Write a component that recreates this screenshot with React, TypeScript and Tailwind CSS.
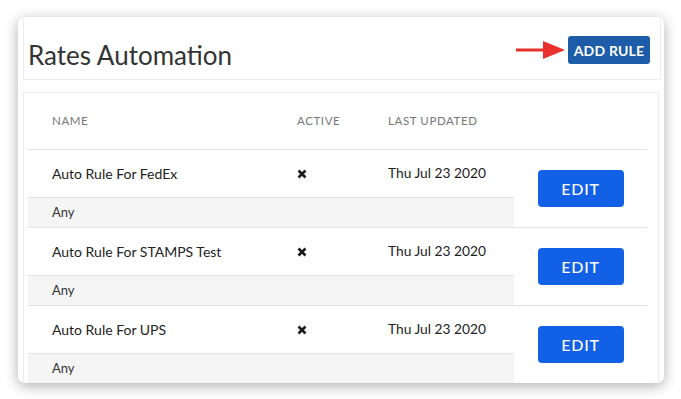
const rules = [
  { name: "Auto Rule For FedEx", updated: "Thu Jul 23 2020" },
  { name: "Auto Rule For STAMPS Test", updated: "Thu Jul 23 2020" },
  { name: "Auto Rule For UPS", updated: "Thu Jul 23 2020" },
];

const CrossIcon = () => (
  <svg width="10" height="10" viewBox="0 0 10 10" className="block">
    <path d="M1.5 1.5 L8.5 8.5 M8.5 1.5 L1.5 8.5" stroke="#1a1a1a" strokeWidth="2.6" />
  </svg>
);

const Arrow = () => (
  <svg width="50" height="20" viewBox="0 0 50 20" className="block">
    <path d="M0 10 H30" stroke="#e8302c" strokeWidth="3.2" />
    <path d="M27 1 L49 10 L27 19 Z" fill="#e8302c" />
  </svg>
);

export default function App() {
  return (
    <div className="w-[681px] h-[399px] bg-white overflow-hidden font-['Lato','Liberation_Sans',sans-serif]">
      <div className="ml-[18px] mt-[17px] w-[646px] h-[366px] bg-white rounded-[7px] shadow-[0_3px_14px_rgba(0,0,0,0.32)] overflow-hidden flex flex-col">
        {/* header panel */}
        <div className="ml-[5px] mr-[3px] mt-[2px] h-[61px] border-x border-b border-[#ececec] flex justify-between">
          <h1 className="pl-[4px] mt-[20px] text-[26px] leading-[32px] text-[#333] font-normal">
            Rates Automation
          </h1>
          <div className="flex items-start mt-[17px] mr-[10px]">
            <div className="mt-[4px] mr-[2px]">
              <Arrow />
            </div>
            <button className="h-[28px] w-[82px] rounded-[3px] bg-[#1d5ca8] text-white text-[14px] font-bold tracking-[0.2px]">
              ADD RULE
            </button>
          </div>
        </div>

        {/* table panel */}
        <div className="ml-[5px] mr-[5px] mt-[12px] flex-1 border-t border-l border-r border-[#ececec] pl-[4px] pr-[11px]">
          <div className="h-[57px] border-b border-[#e2e2e2] flex items-center text-[11.5px] tracking-[0.6px] text-[#777]">
            <div className="w-[269px] pl-[24px]">NAME</div>
            <div className="w-[91px]">ACTIVE</div>
            <div>LAST UPDATED</div>
          </div>
          {rules.map((r, i) => (
            <div
              key={r.name}
              className={`flex ${i < rules.length - 1 ? "border-b border-[#e2e2e2]" : ""}`}
            >
              <div className="w-[486px] flex flex-col">
                <div className="h-[48px] border-b border-[#e2e2e2] flex items-center text-[14px] text-[#222]">
                  <div className="w-[269px] pl-[24px]">{r.name}</div>
                  <div className="w-[91px]">
                    <CrossIcon />
                  </div>
                  <div className="text-[13.75px]">{r.updated}</div>
                </div>
                <div className="h-[29px] bg-[#f5f5f5] flex items-center pl-[24px] text-[13px] text-[#333]">
                  Any
                </div>
              </div>
              <div className="flex-1 flex items-center justify-center">
                <button className="w-[86px] h-[37px] rounded-[4px] bg-[#1160e6] text-white text-[16px] font-medium tracking-[0.8px]">
                  EDIT
                </button>
              </div>
            </div>
          ))}
        </div>
      </div>
    </div>
  );
}
